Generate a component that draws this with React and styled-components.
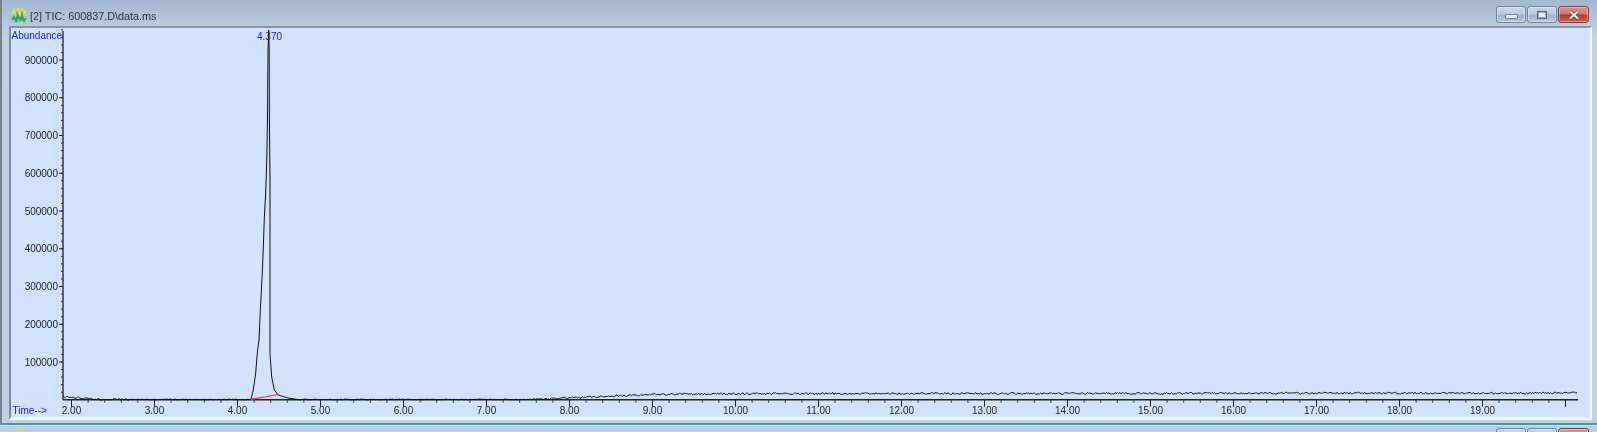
import React from "react";
import styled, { createGlobalStyle } from "styled-components";

const GlobalStyle = createGlobalStyle`
  html, body {
    margin: 0;
    padding: 0;
    background: #bccfe2;
    overflow: hidden;
  }
`;

// chart scale, in px of the plot svg offset by the frame
const OX = 11;
const OY = 28;
const xAt = (t) => 71.5 + (t - 2) * 83 - OX;
const yAt = (v) => 399.75 - (v / 100000) * 37.75 - OY;
const AXIS_Y = 399.75 - OY;
const AXIS_X = 63 - OX;

const yMajor = [100000, 200000, 300000, 400000, 500000, 600000, 700000, 800000, 900000];
const yMinor = Array.from({ length: 49 }, (_, i) => (i + 1) * 20000);
const xMajor = Array.from({ length: 19 }, (_, i) => i + 2);
const xMinor = Array.from({ length: 91 }, (_, i) => 2 + i * 0.2);

const rnd = (() => {
  let s = 4370;
  return () => {
    s = (s * 16807) % 2147483647;
    return s / 2147483647;
  };
})();

const baseAt = (x) => {
  if (x < 100) return 396.5 + ((x - 63) / 37) * 3;
  if (x < 530) return 399.5;
  if (x < 652) return 399.5 - ((x - 530) / 122) * 5;
  if (x < 733) return 394.5 - ((x - 652) / 81) * 0.8;
  return 393.7 - ((x - 733) / 845) * 0.7;
};

const noisy = (from, to) => {
  const pts = [];
  for (let x = from; x <= to; x += 1.2) {
    const amp = x > 540 || x < 130 ? 1.9 : 0.8;
    pts.push([x, baseAt(x) + (rnd() - 0.5) * amp]);
  }
  return pts;
};

const peak = [
  [251, 399.3], [253.3, 390], [255.7, 373], [257.3, 353], [259, 340], [260.3, 310],
  [261.3, 292], [262.3, 272], [263.3, 248], [264.3, 218], [265.7, 193], [266.7, 163],
  [267.5, 117], [268, 50], [268.7, 30], [269.2, 50], [269.4, 117], [269.8, 165],
  [270, 177], [270, 350], [270.2, 357], [271.7, 377], [274.3, 390], [278.3, 395],
  [288, 398], [298, 399.5],
];

const signal = [...noisy(63, 250), ...peak, ...noisy(299, 1578)]
  .map(([x, y]) => `${(x - OX).toFixed(1)},${(y - OY).toFixed(2)}`)
  .join(" ");

const Page = styled.div`
  width: 1597px;
  height: 432px;
  overflow: hidden;
  display: flex;
  flex-direction: column;
  font-family: "Liberation Sans", Arial, sans-serif;
`;

const Window = styled.div`
  height: 425px;
  flex: none;
  display: flex;
  flex-direction: column;
  box-sizing: border-box;
  border-left: 2px solid #79828c;
  border-bottom: 2px solid #3f9aa6;
  background: linear-gradient(180deg, #a3b9d1 0%, #c0d2e4 9%, #bfd2e4 100%);
`;

const TitleBar = styled.div`
  height: 26px;
  flex: none;
  display: flex;
  align-items: center;
  padding: 5px 8px 0 9px;
  box-sizing: border-box;
`;

const TitleIcon = styled.svg`
  width: 16px;
  height: 15px;
  flex: none;
  margin-right: 3px;
`;

const Title = styled.span`
  font-size: 10.8px;
  color: #2d3540;
  flex: 1;
  filter: blur(0.35px);
`;

const Buttons = styled.div`
  display: flex;
  gap: 1px;
  margin-top: -2px;
`;

const CaptionButton = styled.div`
  width: ${(p) => (p.$close ? "31px" : "30px")};
  height: 17px;
  box-sizing: border-box;
  border: 1px solid ${(p) => (p.$close ? "#7d4040" : "#6f859c")};
  border-radius: 3px;
  display: flex;
  align-items: center;
  justify-content: center;
  background: ${(p) =>
    p.$close
      ? "linear-gradient(180deg, #d9968a 0%, #cf7a6a 45%, #bb3a28 55%, #c9604e 100%)"
      : "linear-gradient(180deg, #c6d6e6 0%, #b8cbdf 45%, #9fb6cf 55%, #b3c8dd 100%)"};
  box-shadow: inset 0 0 0 1px rgba(255, 255, 255, 0.35);
  filter: blur(0.3px);
`;

const MinGlyph = styled.div`
  width: 11px;
  height: 3px;
  margin-top: 4px;
  background: #e8eef4;
  border: 1px solid #6d7f92;
  border-radius: 1px;
`;

const MaxGlyph = styled.div`
  width: 10px;
  height: 8px;
  box-sizing: border-box;
  background: #e8eef4;
  border: 1px solid #5a6c7f;
  box-shadow: inset 0 0 0 1px #9aaabb;
`;

const CloseGlyph = styled.svg`
  width: 12px;
  height: 10px;
`;

const ClientFrame = styled.div`
  flex: 1;
  min-height: 0;
  display: flex;
  padding: 0 5px 3px 7px;
`;

const PlotBorder = styled.div`
  flex: 1;
  display: flex;
  border-top: 2px solid #8a949e;
  border-left: 2px solid #7d8894;
  border-right: 2px solid #f4f8fc;
  border-bottom: 3px solid #f4f8fc;
  background: #d0e2fe;
  overflow: hidden;
`;

const Plot = styled.svg`
  display: block;
  flex: none;
  filter: blur(0.45px);
`;

const ScaleText = styled.text`
  font-family: "Liberation Sans", Arial, sans-serif;
  font-size: 10px;
  fill: ${(p) => (p.$blue ? "#1818ff" : "#262626")};
`;

const NextWindow = styled.div`
  flex: 1;
  display: flex;
  align-items: flex-start;
  justify-content: space-between;
  padding: 3px 8px 0 13px;
  background: #bccfe2;
  border-top: 1px solid #d3e0ec;
`;

const NextButtons = styled(Buttons)`
  margin-top: -1px;
`;

const AppIcon = () => (
  <TitleIcon viewBox="0 0 16 15">
    <path d="M1 6 L3 2 L5 6 L7 1 L9 6 L11 1 L13 5 L15 3" fill="none" stroke="#e6e62e" strokeWidth="1.8" />
    <path d="M1 12 L3 9 L5 13 L7 8 L9 12 L11 8 L13 13 L15 10" fill="none" stroke="#22b83c" strokeWidth="2" />
    <path d="M6 3 V14 M11 3 V13" stroke="#3f7f8f" strokeWidth="1" />
  </TitleIcon>
);

const Caption = () => (
  <>
    <CaptionButton>
      <MinGlyph />
    </CaptionButton>
    <CaptionButton>
      <MaxGlyph />
    </CaptionButton>
    <CaptionButton $close>
      <CloseGlyph viewBox="0 0 12 10">
        <path d="M2 1.5 L10 8.5 M10 1.5 L2 8.5" stroke="#6a3a36" strokeWidth="3.2" />
        <path d="M2 1.5 L10 8.5 M10 1.5 L2 8.5" stroke="#f4f0ee" strokeWidth="2" />
      </CloseGlyph>
    </CaptionButton>
  </>
);

const Chromatogram = () => (
  <Plot width="1579" height="390" viewBox="0 0 1579 390">
    <ScaleText $blue x="0.5" y="10.5">Abundance</ScaleText>
    <ScaleText $blue x="246" y="12">4.370</ScaleText>
    <ScaleText $blue x="1.5" y="386">Time--&gt;</ScaleText>

    <line x1={AXIS_X} y1="3" x2={AXIS_X} y2={AXIS_Y} stroke="#111" strokeWidth="1.2" />
    <line x1={AXIS_X} y1={AXIS_Y} x2="1567" y2={AXIS_Y} stroke="#222" strokeWidth="1.5" />

    {yMinor.map((v) => (
      <line key={v} x1={AXIS_X - 2} y1={yAt(v)} x2={AXIS_X} y2={yAt(v)} stroke="#333" />
    ))}
    {yMajor.map((v) => (
      <g key={v}>
        <line x1={AXIS_X - 4} y1={yAt(v)} x2={AXIS_X} y2={yAt(v)} stroke="#222" />
        <ScaleText x={AXIS_X - 5} y={yAt(v) + 3.6} textAnchor="end">{v}</ScaleText>
      </g>
    ))}

    {xMinor.map((t) => (
      <line key={t} x1={xAt(t)} y1={AXIS_Y} x2={xAt(t)} y2={AXIS_Y + 3} stroke="#333" />
    ))}
    {xMajor.map((t) => (
      <g key={t}>
        <line x1={xAt(t)} y1={AXIS_Y} x2={xAt(t)} y2={AXIS_Y + 7} stroke="#222" />
        {t < 20 && (
          <ScaleText x={xAt(t)} y={AXIS_Y + 14} textAnchor="middle">{t.toFixed(2)}</ScaleText>
        )}
      </g>
    ))}

    <polyline points={signal} fill="none" stroke="#111" strokeWidth="1" />
    <line x1={251 - OX} y1={399.3 - OY} x2={278 - OX} y2={394.6 - OY} stroke="#f0404c" strokeWidth="1.4" />
  </Plot>
);

const App = () => (
  <Page>
    <GlobalStyle />
    <Window>
      <TitleBar>
        <AppIcon />
        <Title>[2] TIC: 600837.D\data.ms</Title>
        <Buttons>
          <Caption />
        </Buttons>
      </TitleBar>
      <ClientFrame>
        <PlotBorder>
          <Chromatogram />
        </PlotBorder>
      </ClientFrame>
    </Window>
    <NextWindow>
      <AppIcon />
      <NextButtons>
        <Caption />
      </NextButtons>
    </NextWindow>
  </Page>
);

export default App;
